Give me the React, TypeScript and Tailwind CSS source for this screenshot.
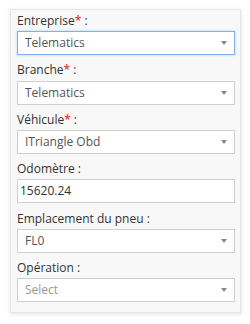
const fields = [
  { label: "Entreprise", required: true, value: "Telematics", type: "select", focus: true },
  { label: "Branche", required: true, value: "Telematics", type: "select" },
  { label: "Véhicule", required: true, value: "ITriangle Obd", type: "select" },
  { label: "Odomètre", required: false, value: "15620.24", type: "text" },
  { label: "Emplacement du pneu", required: false, value: "FL0", type: "select" },
  { label: "Opération", required: false, value: "Select", type: "select", placeholder: true },
];

const Caret = () => (
  <span className="absolute right-[7px] top-1/2 -translate-y-1/2 w-0 h-0 border-l-[3.5px] border-r-[3.5px] border-t-[4.5px] border-l-transparent border-r-transparent border-t-[#888]" />
);

export default function App() {
  return (
    <div className="min-h-screen bg-white pt-[9px] pl-[10px]" style={{ fontFamily: '"Open Sans", sans-serif' }}>
      <div className="w-[231px] bg-[#f8f8f8] border border-[#e6e6e6] shadow-[0_1px_4px_rgba(0,0,0,0.12)] pl-[6px] pr-[5px] pt-[2px] pb-[10px] flex flex-col gap-[6.26px]">
        {fields.map((f) => (
          <div key={f.label} className="flex flex-col">
            <label className="text-[12px] leading-[17.14px] text-[#333] mb-[2px]">
              {f.label}
              {f.required && <span className="text-[#e53935] font-semibold">*</span>} :
            </label>
            <div
              className={
                "relative h-[24px] bg-white border flex items-center text-[12px] " +
                (f.focus
                  ? "border-[#80b0ee] shadow-[0_0_2px_rgba(102,175,233,0.6)]"
                  : "border-[#cfcfcf]") +
                (f.type === "text" ? " pl-[2px] text-[#333]" : " pl-[7px]") +
                (f.placeholder ? " text-[#999]" : f.type === "select" ? " text-[#555]" : "")
              }
            >
              {f.value}
              {f.type === "select" && <Caret />}
            </div>
          </div>
        ))}
      </div>
    </div>
  );
}
